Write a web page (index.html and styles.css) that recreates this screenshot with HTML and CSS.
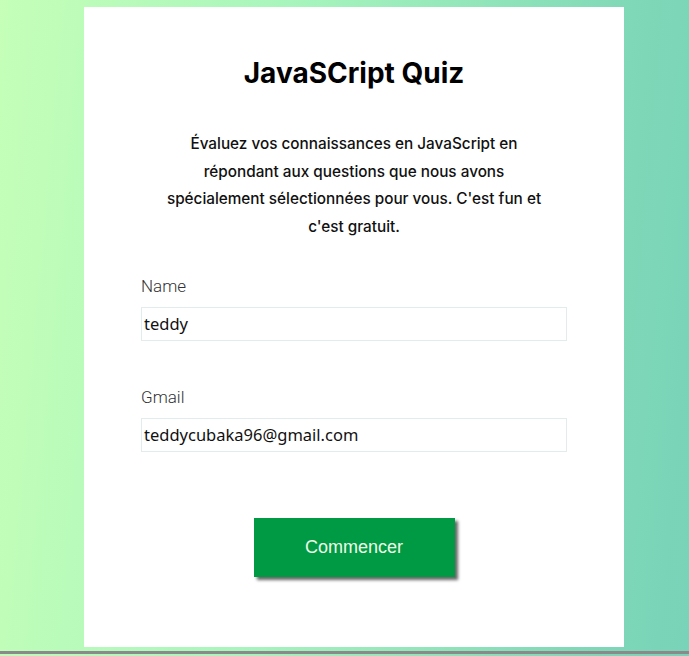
FILE: index.html
```html
<!DOCTYPE html>
<html lang="fr">
<head>
<meta charset="utf-8">
<title>JavaScript Quiz</title>
<link rel="stylesheet" href="styles.css">
</head>
<body>
<main class="page">
  <section class="card">
    <h1 class="title">JavaSCript Quiz</h1>
    <p class="intro">Évaluez vos connaissances en JavaScript en répondant aux questions que nous avons spécialement sélectionnées pour vous. C'est fun et c'est gratuit.</p>
    <form class="form">
      <label class="field">
        <span class="label">Name</span>
        <input class="input" type="text" value="teddy">
      </label>
      <label class="field">
        <span class="label">Gmail</span>
        <input class="input" type="email" value="teddycubaka96@gmail.com">
      </label>
      <div class="actions">
        <button class="btn" type="button">Commencer</button>
      </div>
    </form>
  </section>
</main>
<div class="rule"></div>
</body>
</html>
```
FILE: styles.css
```css
html, body {
  margin: 0;
  padding: 0;
}
body {
  height: 656px;
  background: linear-gradient(95deg, #c5ffb8 0%, #a7f5bd 40%, #7fd8b7 85%, #78d3b8 100%);
  display: flex;
  flex-direction: column;
  overflow: hidden;
}
.page {
  display: flex;
  padding-top: 7px;
  padding-left: 84px;
}
.card {
  width: 540px;
  height: 640px;
  box-sizing: border-box;
  background: #fff;
  padding: 46px 57px 0;
}
.title {
  margin: 0;
  text-align: center;
  font-family: Inter, "Liberation Sans", sans-serif;
  font-weight: 700;
  font-size: 28px;
  line-height: 40px;
  color: #000;
}
.intro {
  margin: 37px auto 0;
  width: 400px;
  text-align: center;
  font-family: Inter, "Liberation Sans", sans-serif;
  font-weight: 500;
  font-size: 15.3px;
  line-height: 27.7px;
  color: #111;
}
.form {
  margin-top: 35px;
  display: flex;
  flex-direction: column;
}
.field {
  display: flex;
  flex-direction: column;
  margin-bottom: 46px;
}
.label {
  font-family: Roboto, "Liberation Sans", sans-serif;
  font-weight: 300;
  font-size: 17px;
  line-height: 20px;
  color: #333;
  margin-bottom: 11px;
}
.input {
  box-sizing: border-box;
  width: 426px;
  height: 34px;
  border: 1px solid #e3ecec;
  padding: 0 2px;
  font-family: "Noto Sans", "Open Sans", sans-serif;
  font-size: 16.5px;
  color: #111;
  outline: none;
  background: #fff;
}
.actions {
  display: flex;
  justify-content: center;
  margin-top: 20px;
}
.btn {
  width: 201px;
  height: 59px;
  border: 0;
  background: #009a44;
  color: #eefbe8;
  font-family: "Liberation Sans", Arial, sans-serif;
  font-size: 18px;
  box-shadow: 3px 3px 3px rgba(0, 0, 0, 0.6);
  cursor: pointer;
}
.rule {
  margin-top: 4px;
  height: 3px;
  background: #8a8a8a;
}
```
